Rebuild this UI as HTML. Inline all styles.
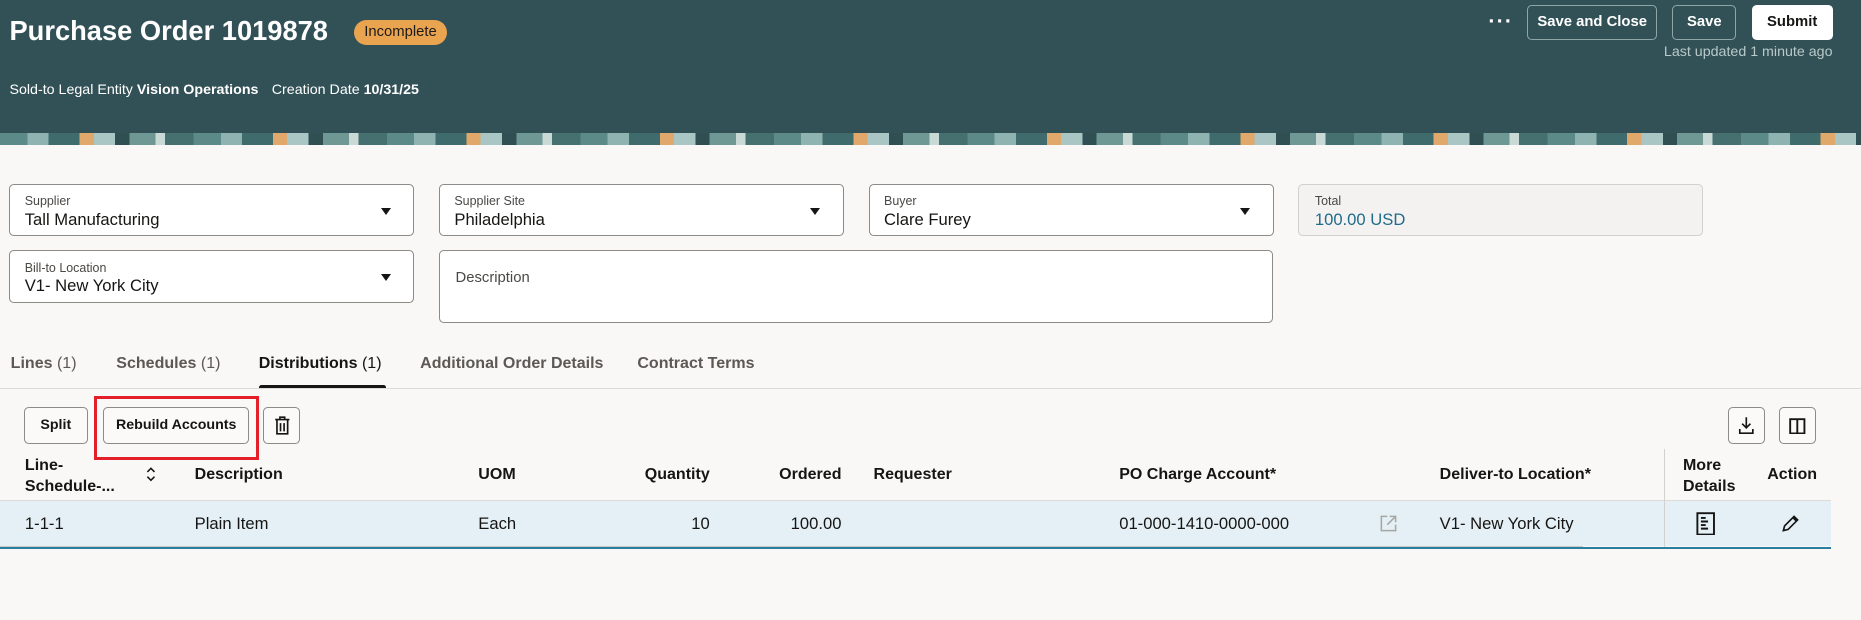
<!DOCTYPE html>
<html><head><style>
*{box-sizing:border-box;margin:0;padding:0}
html,body{width:1861px;height:620px;overflow:hidden;background:#f9f8f6}
#w{zoom:1.18686;position:relative;width:1568px;height:523px;font-family:"Liberation Sans",sans-serif;color:#161513}
.a{position:absolute;white-space:nowrap}
.hdr{left:0;top:0;width:1568px;height:112px;background:#325157}
.band{left:0;top:112px;width:1568px;height:10px;background:repeating-linear-gradient(90deg,#5c8a88 0 23px,#8fb3b0 23px 41px,#3f6b6c 41px 67px,#e0a86a 67px 79px,#a9c6c4 79px 97px,#2f4f52 97px 109px,#6f9794 109px 131px,#c9d9d6 131px 139px,#45706f 139px 163px)}
.btn{border:1px solid #8fa5a6;border-radius:4px;color:#fff;font-weight:bold;font-size:12.5px;text-align:center;line-height:28px}
.fld{background:#fff;border:1px solid #8d8b88;border-radius:4px}
.lbl{font-size:10.5px;color:#4a4845}
.val{font-size:14px;color:#161513}
.car{width:0;height:0;border-left:5px solid transparent;border-right:5px solid transparent;border-top:6px solid #161513}
.tab{font-size:13.5px;font-weight:bold;color:#5c5955;top:298px}
.tab span{font-weight:normal}
.tb{border:1px solid #8d8b88;border-radius:4px;background:#fbfaf9;font-size:12px;font-weight:bold;text-align:center;line-height:29px;height:31px}
.th{font-size:13.5px;font-weight:bold;color:#161513}
.td{font-size:14px;color:#161513;top:433px}
</style></head><body><div id="w">
<div class="a hdr"></div><div class="a band"></div>
<div class="a" style="left:8px;top:13px;font-size:23px;font-weight:bold;color:#fff">Purchase Order 1019878</div>
<div class="a" style="left:298px;top:17px;width:79px;height:21px;border-radius:11px;background:#eaa450;font-size:12.5px;text-align:center;line-height:21px;color:#1d1b19">Incomplete</div>
<div class="a" style="left:8px;top:69px;font-size:12px;color:#fff">Sold-to Legal Entity <b>Vision Operations</b></div>
<div class="a" style="left:229px;top:69px;font-size:12px;color:#fff">Creation Date <b>10/31/25</b></div>
<div class="a" style="left:1254px;top:8px;font-size:18px;color:#fff;letter-spacing:1px;font-weight:bold">&middot;&middot;&middot;</div>
<div class="a btn" style="left:1287px;top:4px;width:109px;height:30px">Save and Close</div>
<div class="a btn" style="left:1409px;top:4px;width:54px;height:30px">Save</div>
<div class="a btn" style="left:1476px;top:4px;width:68px;height:30px;background:#fff;border-color:#fff;color:#161513">Submit</div>
<div class="a" style="right:24px;top:37px;font-size:12px;color:#b9c9ca">Last updated 1 minute ago</div>

<div class="a fld" style="left:8px;top:155px;width:341px;height:44px"><div class="a lbl" style="left:12px;top:8px">Supplier</div><div class="a val" style="left:12px;top:21px">Tall Manufacturing</div><div class="a car" style="left:312px;top:19px"></div></div>
<div class="a fld" style="left:370px;top:155px;width:341px;height:44px"><div class="a lbl" style="left:12px;top:8px">Supplier Site</div><div class="a val" style="left:12px;top:21px">Philadelphia</div><div class="a car" style="left:312px;top:19px"></div></div>
<div class="a fld" style="left:732px;top:155px;width:341px;height:44px"><div class="a lbl" style="left:12px;top:8px">Buyer</div><div class="a val" style="left:12px;top:21px">Clare Furey</div><div class="a car" style="left:312px;top:19px"></div></div>
<div class="a" style="left:1094px;top:155px;width:341px;height:44px;border:1px solid #d3d1ce;border-radius:4px;background:#f4f2f0"><div class="a lbl" style="left:13px;top:8px">Total</div><div class="a" style="left:13px;top:21px;font-size:14px;color:#1f6b8a">100.00 USD</div></div>
<div class="a fld" style="left:8px;top:211px;width:341px;height:44px"><div class="a lbl" style="left:12px;top:8px">Bill-to Location</div><div class="a val" style="left:12px;top:21px">V1- New York City</div><div class="a car" style="left:312px;top:19px"></div></div>
<div class="a fld" style="left:370px;top:211px;width:703px;height:61px"><div class="a" style="left:13px;top:16px;font-size:12.5px;color:#4a4845">Description</div></div>

<div class="a tab" style="left:9px">Lines <span>(1)</span></div>
<div class="a tab" style="left:98px">Schedules <span>(1)</span></div>
<div class="a tab" style="left:218px;color:#161513">Distributions <span>(1)</span></div>
<div class="a tab" style="left:354px">Additional Order Details</div>
<div class="a tab" style="left:537px">Contract Terms</div>
<div class="a" style="left:0;top:327px;width:1568px;height:1px;background:#dddbd8"></div>
<div class="a" style="left:218px;top:324px;width:107px;height:3px;background:#161513;border-radius:2px 2px 0 0"></div>

<div class="a tb" style="left:20px;top:343px;width:54px">Split</div>
<div class="a tb" style="left:87px;top:343px;width:123px">Rebuild Accounts</div>
<div class="a tb" style="left:222px;top:343px;width:31px"><svg width="14" height="16" viewBox="0 0 14 16" style="margin-top:7px"><path d="M1 3h12M5 3V1h4v2M2.5 3.5v11.5h9V3.5M5.5 6v7M8.5 6v7" fill="none" stroke="#161513" stroke-width="1.4"/></svg></div>
<div class="a" style="left:79px;top:334px;width:139px;height:54px;border:3px solid #e3202a"></div>
<div class="a tb" style="left:1456px;top:343px;width:31px"><svg width="14" height="16" viewBox="0 0 14 16" style="margin-top:7px"><path d="M7 1v9M3.5 6.5L7 10l3.5-3.5M1.5 11v3.5h11V11" fill="none" stroke="#161513" stroke-width="1.4"/></svg></div>
<div class="a tb" style="left:1499px;top:343px;width:31px"><svg width="14" height="14" viewBox="0 0 14 14" style="margin-top:8px"><path d="M1 1h12v12H1zM7 1v12" fill="none" stroke="#161513" stroke-width="1.6"/></svg></div>

<div class="a th" style="left:21px;top:383px;line-height:18px">Line-<br>Schedule-...</div>
<svg class="a" style="left:122px;top:393px" width="10" height="14" viewBox="0 0 10 14"><path d="M2 5l3-3 3 3M2 9l3 3 3-3" fill="none" stroke="#161513" stroke-width="1.3"/></svg>
<div class="a th" style="left:164px;top:392px">Description</div>
<div class="a th" style="left:403px;top:392px">UOM</div>
<div class="a th" style="right:970px;top:392px">Quantity</div>
<div class="a th" style="right:859px;top:392px">Ordered</div>
<div class="a th" style="left:736px;top:392px">Requester</div>
<div class="a th" style="left:943px;top:392px">PO Charge Account*</div>
<div class="a th" style="left:1213px;top:392px">Deliver-to Location*</div>
<div class="a th" style="left:1418px;top:383px;line-height:18px">More<br>Details</div>
<div class="a th" style="left:1489px;top:392px">Action</div>
<div class="a" style="left:0;top:421px;width:1543px;height:1px;background:#dddbd8"></div>
<div class="a" style="left:0;top:422px;width:1543px;height:38px;background:#e4f0f6"></div>
<div class="a" style="left:1402px;top:378px;width:1px;height:83px;background:#d3d1ce"></div>
<div class="a td" style="left:21px">1-1-1</div>
<div class="a td" style="left:164px">Plain Item</div>
<div class="a td" style="left:403px">Each</div>
<div class="a td" style="right:970px">10</div>
<div class="a td" style="right:859px">100.00</div>
<div class="a td" style="left:943px">01-000-1410-0000-000</div>
<svg class="a" style="left:1162px;top:433px" width="16" height="16" viewBox="0 0 16 16"><path d="M7 2H2v12h12V9M9 2h5v5M14 2L7 9" fill="none" stroke="#a8a6a3" stroke-width="1.3"/></svg>
<div class="a td" style="left:1213px">V1- New York City</div>
<svg class="a" style="left:1428px;top:431px" width="18" height="20" viewBox="0 0 18 20"><path d="M2 1h14v18H2zM5 5h4M5 8h6M5 11h4M5 14h6" fill="none" stroke="#161513" stroke-width="1.6"/></svg>
<svg class="a" style="left:1501px;top:433px" width="16" height="16" viewBox="0 0 16 16"><path d="M2 14l1-4 8-8 3 3-8 8zM10 3l3 3" fill="none" stroke="#161513" stroke-width="1.4"/></svg>
<div class="a" style="left:0;top:460px;width:1334px;height:1px;background:#c9c7c4"></div>
<div class="a" style="left:0;top:461px;width:1543px;height:1.5px;background:#2a7ea0"></div>
</div></body></html>
